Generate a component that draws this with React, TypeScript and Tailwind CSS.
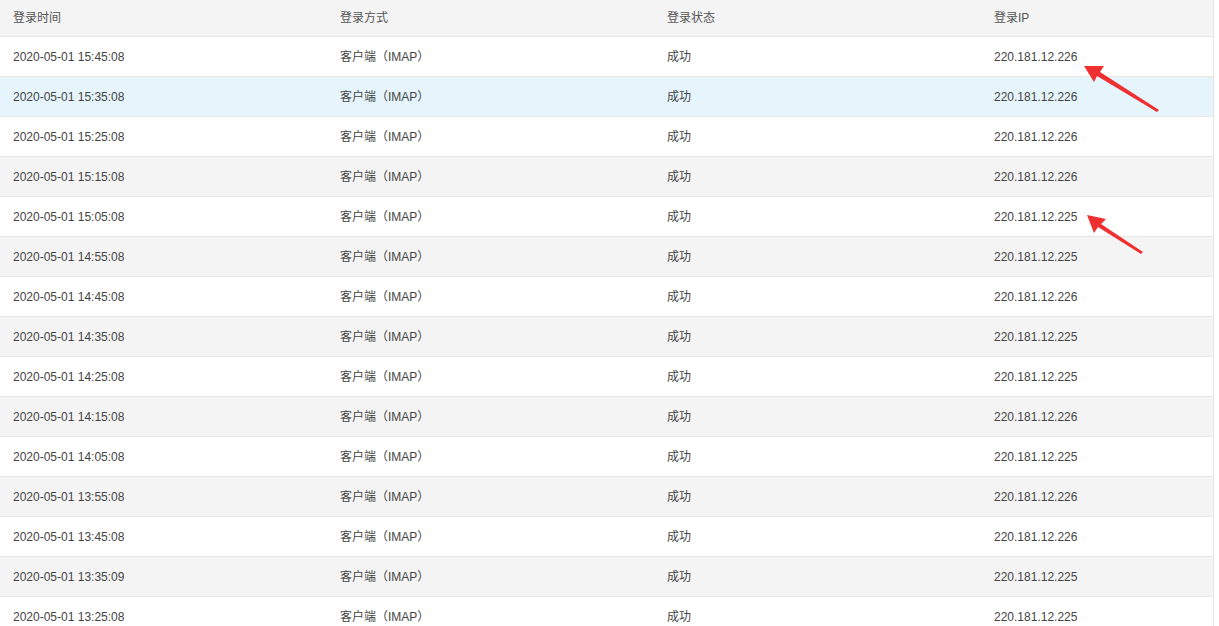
import React from "react";

const times = ["15:45:08","15:35:08","15:25:08","15:15:08","15:05:08","14:55:08","14:45:08","14:35:08","14:25:08","14:15:08","14:05:08","13:55:08","13:45:08","13:35:09","13:25:08"];
const ips = ["226","226","226","226","225","225","226","225","225","226","225","226","226","225","225"];

export default function App() {
  return (
    <div className="relative w-[1219px] h-[626px] overflow-hidden bg-white text-[12px] text-[#444]" style={{ fontFamily: '"Liberation Sans", Arial, "Noto Sans CJK SC", sans-serif' }}>
      <div className="w-[1214px] border-r border-[#e4e4e4]">
        <div className="grid grid-cols-[327px_327px_327px_1fr] h-[37px] items-center bg-[#f4f4f4] border-b border-[#e6e6e6] text-[#555]">
          <div className="pl-[13px]">登录时间</div>
          <div className="pl-[13px]">登录方式</div>
          <div className="pl-[13px]">登录状态</div>
          <div className="pl-[13px]">登录IP</div>
        </div>
        {times.map((t, i) => (
          <div key={i} className={`grid grid-cols-[327px_327px_327px_1fr] h-[40px] items-center border-b border-[#e8e8e8] ${i === 1 ? "bg-[#e5f5fb]" : i % 2 === 1 ? "bg-[#f4f4f4]" : "bg-white"}`}>
            <div className="pl-[13px]">2020-05-01 {t}</div>
            <div className="pl-[13px]">客户端（IMAP）</div>
            <div className="pl-[13px]">成功</div>
            <div className="pl-[13px]">220.181.12.{ips[i]}</div>
          </div>
        ))}
      </div>
      <svg className="absolute left-0 top-0 pointer-events-none" width="1219" height="626">
        <polygon points="1084,66 1104,66 1100,72 1159,110 1157,112 1097,76 1094,82" fill="#ee3030" />
        <polygon points="1087,215 1106,219 1101,224 1143,252 1141,254 1098,227 1094,233" fill="#ee3030" />
      </svg>
    </div>
  );
}
